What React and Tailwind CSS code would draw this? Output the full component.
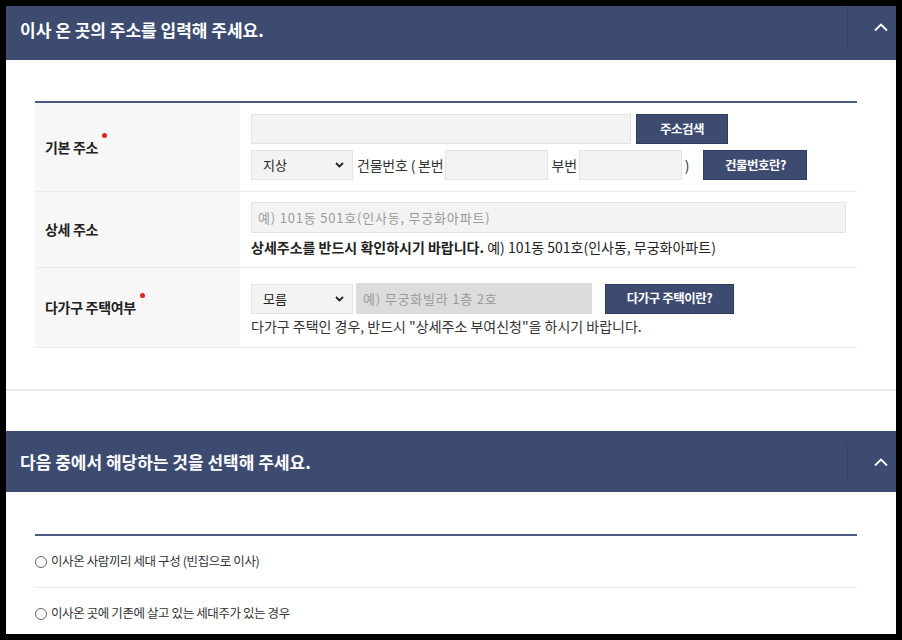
import React from 'react';

const font = "font-['Noto_Sans_CJK_KR','Noto_Sans',sans-serif]";

function Chevron() {
  return <svg width="16" height="10" viewBox="0 0 16 10" fill="none">
      <path d="M2 8.5 L8 2.5 L14 8.5" stroke="white" strokeWidth="1.8" />
    </svg>;
}

function Header({ title, tall }) {
  return <div className={`flex items-stretch bg-[#3d4b71] ${tall ? 'h-[61px]' : 'h-[54px] pb-[6px]'}`}>
      <div className="flex flex-1 items-center pl-[14px] text-[17px] font-bold tracking-normal text-white">
        {title}
      </div>
      <div className={`flex w-[49px] items-center pl-[25px] ${tall ? 'my-[11px]' : 'mb-[4px] mt-[-2px]'} border-l border-[#36436a]`}>
        <Chevron />
      </div>
    </div>;
}

function SelectBox({ value }) {
  return <div className="flex h-[30px] w-[102px] items-center justify-between border border-[#e4e4e4] bg-[#f3f3f3] pl-[11px] pr-[8px] text-[13px] tracking-normal text-[#222]">
      <span>{value}</span>
      <svg width="9" height="6" viewBox="0 0 9 6" fill="none">
        <path d="M1 1 L4.5 4.5 L8 1" stroke="#222" strokeWidth="1.8" />
      </svg>
    </div>;
}

function NavyButton({ children, w }) {
  return <div className={`flex h-[30px] ${w} items-center justify-center border border-[#2f3b5c] bg-[#3d4b71] text-[12.5px] font-bold tracking-[-0.5px] text-white`}>
      {children}
    </div>;
}

function Label({ children, req }) {
  return <div className="flex w-[205px] items-center bg-[#f7f7f7] pl-[10px]">
      <span className="relative text-[14px] font-bold tracking-[-0.3px] text-[#222]">
        {children}
        {req && <span className="absolute right-[-9px] top-[-4px] h-[5px] w-[5px] rounded-full bg-[#e2231a]" />}
      </span>
    </div>;
}

export default function App() {
  return <div className={`h-[640px] w-[902px] overflow-hidden bg-black px-[6px] pt-[6px] ${font}`}>
      <div className="h-[628px] w-[890px] overflow-hidden bg-white">
        <Header title="이사 온 곳의 주소를 입력해 주세요." />

        <div className="ml-[29px] mt-[41px] w-[822px] border-t-2 border-[#4a5884]">
          {/* 기본 주소 */}
          <div className="flex border-b border-[#ececec]">
            <Label req>기본 주소</Label>
            <div className="flex flex-col gap-[6px] py-[11px] pl-[11px]">
              <div className="flex items-center gap-[5px]">
                <div className="h-[30px] w-[380px] border border-[#e4e4e4] bg-[#f3f3f3]" />
                <NavyButton w="w-[92px]">주소검색</NavyButton>
              </div>
              <div className="flex items-center text-[14px] tracking-[-0.2px] text-[#333]">
                <SelectBox value="지상" />
                <span className="ml-[4px]">건물번호 ( 본번</span>
                <div className="ml-[2px] h-[30px] w-[103px] border border-[#e4e4e4] bg-[#f3f3f3]" />
                <span className="ml-[3px]">부번</span>
                <div className="ml-[2px] h-[30px] w-[103px] border border-[#e4e4e4] bg-[#f3f3f3]" />
                <span className="ml-[3px]">)</span>
                <div className="ml-[14px]">
                  <NavyButton w="w-[104px]">건물번호란?</NavyButton>
                </div>
              </div>
            </div>
          </div>

          {/* 상세 주소 */}
          <div className="flex border-b border-[#ececec]">
            <Label>상세 주소</Label>
            <div className="flex flex-col gap-[4px] pb-[10px] pl-[11px] pt-[10px]">
              <div className="flex h-[31px] w-[595px] items-center border border-[#e4e4e4] bg-[#f3f3f3] pl-[6px] text-[13px] tracking-[0.8px] text-[#9a9a9a]">
                예) 101동 501호(인사동, 무궁화아파트)
              </div>
              <div className="h-[20px] text-[14px] leading-[20px] tracking-normal text-[#222]">
                <span className="font-bold">상세주소를 반드시 확인하시기 바랍니다.</span> 예) 101동 501호(인사동, 무궁화아파트)
              </div>
            </div>
          </div>

          {/* 다가구 주택여부 */}
          <div className="flex border-b border-[#ececec]">
            <Label req>다가구 주택여부</Label>
            <div className="flex flex-col gap-[2px] pb-[11px] pl-[11px] pt-[15px]">
              <div className="flex items-center">
                <SelectBox value="모름" />
                <div className="ml-[3px] flex h-[31px] w-[236px] items-center bg-[#dcdcdc] pl-[7px] text-[13px] tracking-[0.8px] text-[#9a9a9a]">
                  예) 무궁화빌라 1층 2호
                </div>
                <div className="ml-[13px]">
                  <NavyButton w="w-[129px]">다가구 주택이란?</NavyButton>
                </div>
              </div>
              <div className="h-[20px] text-[14px] leading-[20px] tracking-normal text-[#333]">
                다가구 주택인 경우, 반드시 "상세주소 부여신청"을 하시기 바랍니다.
              </div>
            </div>
          </div>
        </div>

        <div className="mt-[41px] h-[2px] bg-[#e8e8e8]" />

        <div className="mt-[40px]">
          <Header title="다음 중에서 해당하는 것을 선택해 주세요." tall />
        </div>

        <div className="ml-[29px] mt-[42px] w-[822px] border-t-2 border-[#4a5884]">
          {['이사온 사람끼리 세대 구성 (빈집으로 이사)', '이사온 곳에 기존에 살고 있는 세대주가 있는 경우'].map(t => <div key={t} className="flex h-[52px] items-center gap-[4px] border-b border-[#ececec] text-[12.5px] tracking-[-0.4px] text-[#333]">
              <span className="h-[12px] w-[12px] rounded-full border border-[#666]" />
              <span>{t}</span>
            </div>)}
        </div>
      </div>
    </div>;
}
